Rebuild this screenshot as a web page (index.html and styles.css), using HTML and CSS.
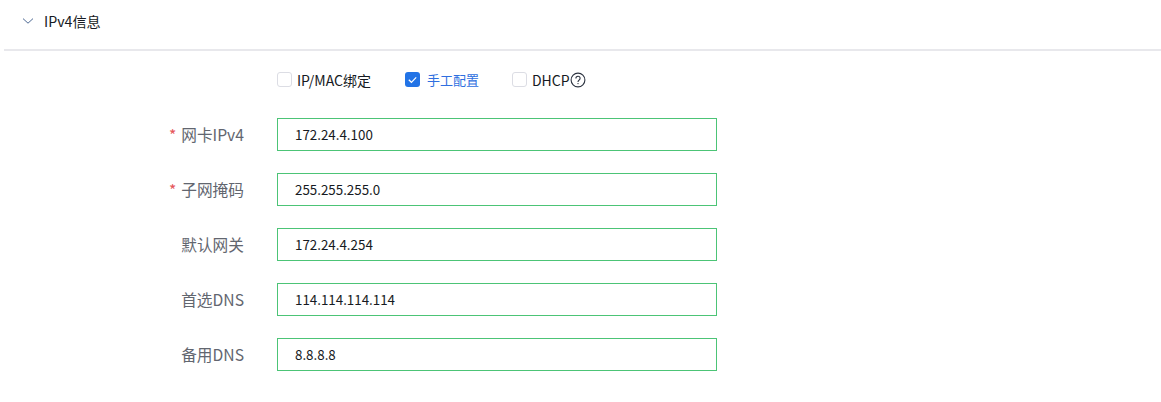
FILE: index.html
```html
<!DOCTYPE html>
<html lang="zh-CN">
<head>
  <meta charset="UTF-8" />
  <title>IPv4信息</title>
  <link rel="stylesheet" href="styles.css">
</head>
<body>
  <div class="section-head">
    <svg class="arrow" width="12" height="12" viewBox="0 0 12 12"><path d="M1 3.6l5 4.6 5-4.6" fill="none" stroke="#4f6a94" stroke-width="1"/></svg>
    <span class="section-title">IPv4信息</span>
  </div>

  <form class="form">
    <div class="row row-check">
      <div class="label"></div>
      <div class="checks">
        <label class="check check-mac"><span class="box"></span>IP/MAC绑定</label>
        <label class="check check-manual on">
          <span class="box"><svg width="15" height="15" viewBox="0 0 15 15"><path d="M3.8 7.8l2.6 2.5 4.8-5" fill="none" stroke="#fff" stroke-width="1.2"/></svg></span>手工配置
        </label>
        <label class="check"><span class="box"></span>DHCP<svg class="help" width="16" height="16" viewBox="0 0 16 16"><circle cx="8" cy="8" r="6.9" fill="none" stroke="#2c3340" stroke-width="1.1"/><path d="M5.9 6.4c0-1.3 1-2.1 2.1-2.1s2.1.8 2.1 2c0 1.8-2.1 1.8-2.1 3.6" fill="none" stroke="#2c3340" stroke-width="1.1"/><circle cx="8" cy="11.6" r=".7" fill="#2c3340"/></svg></label>
      </div>
    </div>

    <div class="row">
      <div class="label"><span class="req">*</span>网卡IPv4</div>
      <input class="field" type="text" value="172.24.4.100">
    </div>
    <div class="row">
      <div class="label"><span class="req">*</span>子网掩码</div>
      <input class="field" type="text" value="255.255.255.0">
    </div>
    <div class="row">
      <div class="label">默认网关</div>
      <input class="field" type="text" value="172.24.4.254">
    </div>
    <div class="row">
      <div class="label">首选DNS</div>
      <input class="field" type="text" value="114.114.114.114">
    </div>
    <div class="row">
      <div class="label">备用DNS</div>
      <input class="field" type="text" value="8.8.8.8">
    </div>
  </form>
</body>
</html>
```

FILE: styles.css
```css
body {
  margin: 0;
  background: #fff;
  color: #161a22;
  font-family: "Noto Sans CJK SC", "Noto Sans", sans-serif;
  font-size: 14px;
}

.section-head {
  display: flex;
  align-items: center;
  height: 51px;
  margin-left: 4px;
  padding-left: 18px;
  padding-bottom: 8px;
  box-sizing: border-box;
  border-bottom: 2px solid #e8e8ec;
}

.arrow {
  margin-right: 10px;
}

.section-title {
  font-size: 14.2px;
}

.form {
  display: flex;
  flex-direction: column;
  gap: 22px;
  padding-top: 18px;
}

.row {
  display: flex;
  align-items: center;
  height: 33px;
}

.row-check {
  height: 21px;
  margin-bottom: 6px;
}

.label {
  width: 244px;
  margin-right: 33px;
  text-align: right;
  font-size: 15.7px;
  color: #62666f;
}

.req {
  color: #e5585c;
  margin-right: 5px;
}

.checks {
  display: flex;
  align-items: center;
}

.check {
  display: flex;
  align-items: center;
}

.check-mac {
  margin-right: 34px;
}

.check-manual {
  margin-right: 33px;
  font-size: 13px;
}

.box {
  display: block;
  width: 15px;
  height: 15px;
  margin-right: 5px;
  box-sizing: border-box;
  border: 1px solid #dcdde4;
  border-radius: 3px;
  background: #fff;
}

.check.on {
  color: #2f6fe0;
}

.check.on .box {
  margin-right: 7px;
  background: #2273e6;
  border: 0;
}

.box svg {
  display: block;
}

.field {
  width: 440px;
  height: 33px;
  box-sizing: border-box;
  padding: 0 17px;
  border: 1px solid #4cc476;
  border-radius: 0;
  outline: none;
  font-family: inherit;
  font-size: 13.35px;
  color: #161a22;
}
```
